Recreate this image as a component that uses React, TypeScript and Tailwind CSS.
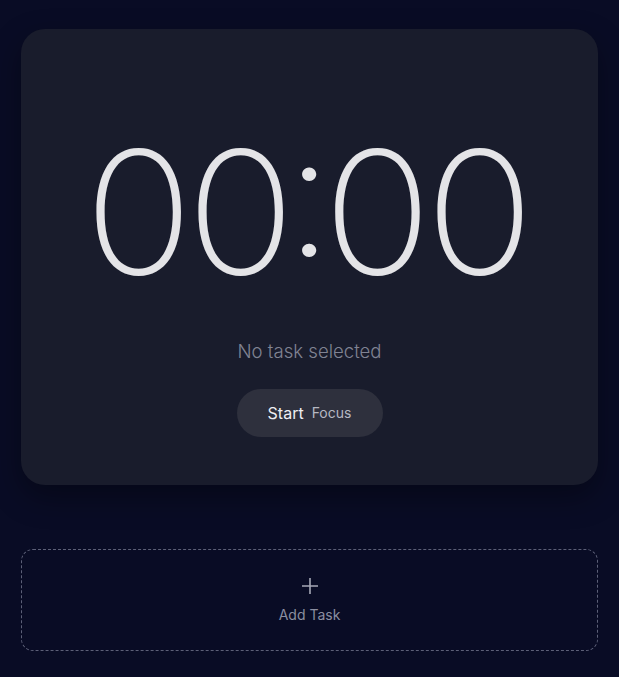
import React from 'react';

export default function App() {
  return (
    <div
      className="min-h-screen bg-[#090c25] px-[21px] pt-[29px] pb-6"
      style={{ fontFamily: 'Inter, "Noto Sans", sans-serif' }}
    >
      {/* Timer card */}
      <div className="h-[456px] rounded-[24px] bg-[#191c2c] shadow-[0_12px_30px_rgba(0,0,0,0.35)] flex flex-col items-center pt-[97px]">
        <div className="flex items-center pr-[7px] text-[#e4e4e7] font-extralight leading-none text-[171px] tracking-[-6.5px] scale-x-[1.055]">
          <span>00</span>
          <span className="-mx-[4px] -translate-y-[18px]">:</span>
          <span>00</span>
        </div>
        <p className="mt-[41px] text-[18.6px] font-light text-[#808393]">No task selected</p>
        <button className="mt-[23px] h-[48px] w-[146px] rounded-full bg-[#2e303d] flex items-center justify-center gap-2">
          <span className="text-[16px] text-[#eeeef2]">Start</span>
          <span className="text-[14px] text-[#b6b8c3]">Focus</span>
        </button>
      </div>

      {/* Add task */}
      <button className="mt-[64px] w-full h-[102px] rounded-[12px] border border-dashed border-[#5d6078] flex flex-col items-center justify-center gap-[8px]">
        <svg width="20" height="20" viewBox="0 0 20 20" fill="none" stroke="#a6a8b6" strokeWidth="1.6">
          <path d="M10 2v16M2 10h16" />
        </svg>
        <span className="text-[14px] text-[#8b8ea0]">Add Task</span>
      </button>
    </div>
  );
}
